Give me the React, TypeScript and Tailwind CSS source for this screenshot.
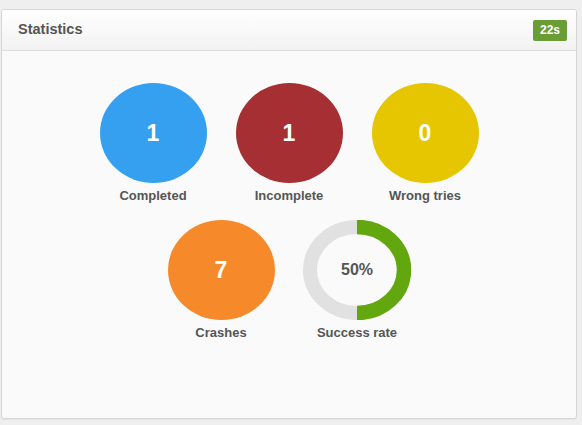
import React from "react";

type Stat = { value: string; label: string; color: string };

const row1: Stat[] = [
  { value: "1", label: "Completed", color: "bg-[#35a0ef]" },
  { value: "1", label: "Incomplete", color: "bg-[#a52f33]" },
  { value: "0", label: "Wrong tries", color: "bg-[#e5c600]" },
];

function Bubble({ s }: { s: Stat }) {
  return (
    <div className="flex w-[136px] flex-col items-center">
      <div
        className={`flex h-[100px] w-[107px] items-center justify-center rounded-[50%] ${s.color} text-[23px] font-bold text-white`}
      >
        {s.value}
      </div>
      <div className="mt-[5px] text-[13px] leading-[16px] font-bold text-[#555]">{s.label}</div>
    </div>
  );
}

function Ring() {
  return (
    <div className="flex w-[136px] flex-col items-center">
      <div className="relative flex h-[100px] w-[108px] items-center justify-center">
        <svg className="absolute inset-0" width="108" height="100" viewBox="0 0 108 100">
          <ellipse cx="54" cy="50" rx="47" ry="43" fill="none" stroke="#e1e1e1" strokeWidth="14" />
          <path d="M54 7 A47 43 0 0 1 54 93" fill="none" stroke="#63a70f" strokeWidth="14.5" />
        </svg>
        <span className="relative text-[16px] font-bold text-[#555]">50%</span>
      </div>
      <div className="mt-[5px] text-[13px] leading-[16px] font-bold text-[#555]">Success rate</div>
    </div>
  );
}

export default function App() {
  return (
    <div
      className="h-[425px] w-[582px] bg-[#efefef] pt-[9px] pr-[5px] pb-[6px] pl-[1px]"
      style={{ fontFamily: '"Liberation Sans", Arial, sans-serif' }}
    >
      <div className="flex h-full flex-col overflow-hidden rounded-[3px] border border-[#d6d6d6] bg-[#fafafa] shadow-[0_1px_1px_rgba(0,0,0,0.05)]">
        <div className="flex h-[41px] items-center justify-between border-b border-[#dcdcdc] bg-gradient-to-b from-white to-[#f2f2f2] pr-[9px] pl-[16px]">
          <div className="text-[14.5px] font-bold text-[#555]">Statistics</div>
          <div className="rounded-[2px] bg-[#6a9d34] px-[7px] text-[12px] leading-[21px] font-bold text-white">22s</div>
        </div>
        <div className="flex flex-col items-center gap-[16px] pt-[32px]">
          <div className="flex">
            {row1.map((s) => (
              <Bubble key={s.label} s={s} />
            ))}
          </div>
          <div className="flex">
            <Bubble s={{ value: "7", label: "Crashes", color: "bg-[#f6892a]" }} />
            <Ring />
          </div>
        </div>
      </div>
    </div>
  );
}
